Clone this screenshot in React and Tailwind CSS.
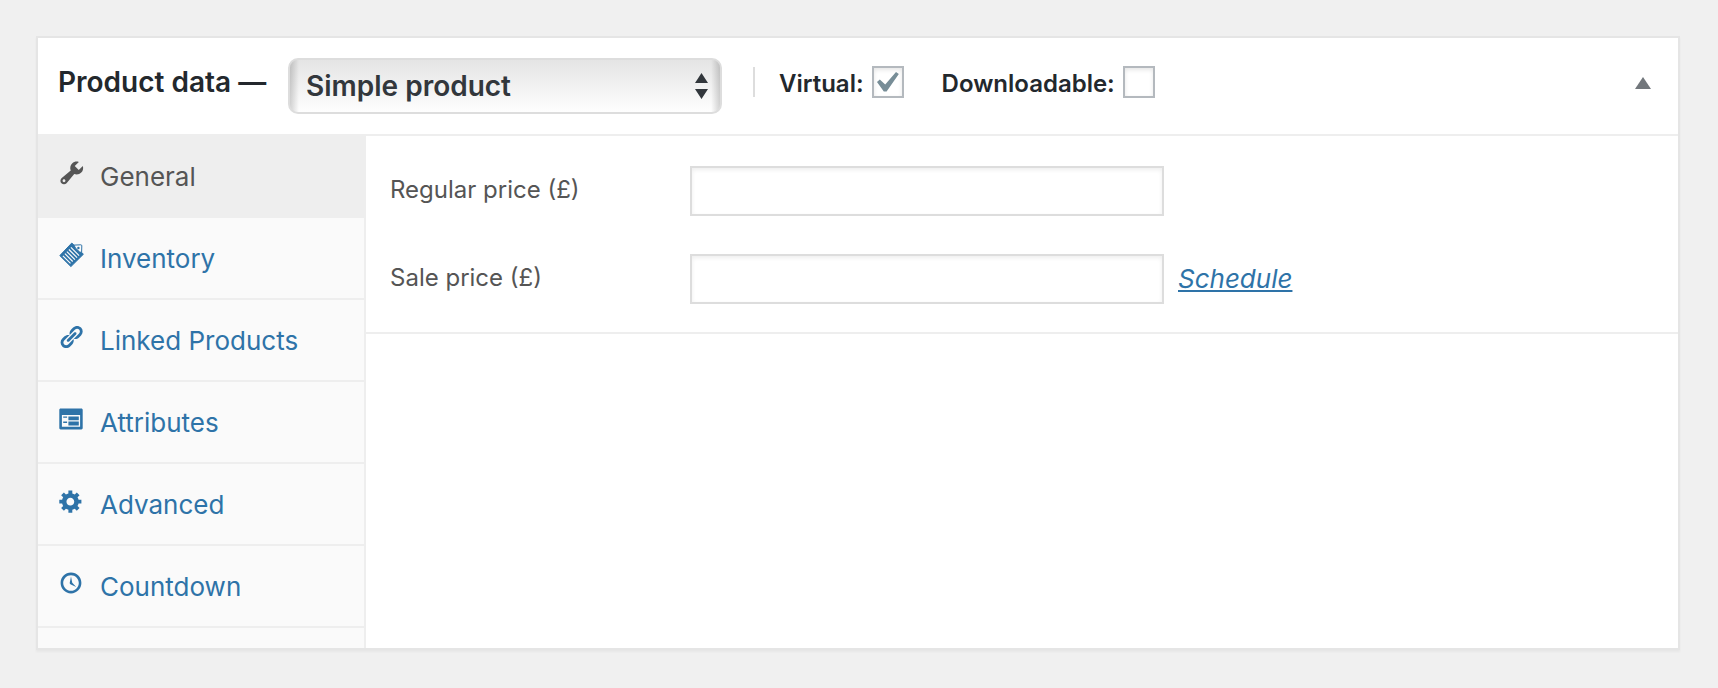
import { useState } from "react";

const icons = {
  wrench: {
    viewBox: "0.3 0.9 18.3 18.3",
    path: "M16.68 9.77c-1.34 1.34-3.3 1.67-4.95.99l-5.41 6.52c-.99.99-2.59.99-3.58 0s-.99-2.59 0-3.57l6.52-5.42c-.68-1.65-.35-3.61.99-4.95 1.28-1.28 3.12-1.62 4.72-1.06l-2.89 2.89 2.82 2.82 2.86-2.87c.53 1.58.18 3.39-1.08 4.65zM3.81 16.21c.4.39 1.04.39 1.43 0 .4-.4.4-1.04 0-1.43-.39-.4-1.03-.4-1.43 0-.39.39-.39 1.03 0 1.43z",
  },
  link: {
    viewBox: "0 0 20 20",
    path: "M17.74 2.76c1.68 1.69 1.68 4.41 0 6.1l-1.53 1.52c-1.12 1.12-2.7 1.47-4.14 1.09l2.62-2.61.76-.77.76-.76c.84-.84.84-2.2 0-3.04-.84-.85-2.2-.85-3.04 0l-.77.76-3.38 3.38c-.37-1.44-.02-3.02 1.1-4.14l1.52-1.53c1.69-1.68 4.42-1.68 6.1 0zM8.59 13.43l5.34-5.34c.42-.42.42-1.1 0-1.52-.44-.43-1.13-.39-1.53 0l-5.33 5.34c-.42.42-.42 1.1 0 1.52.44.43 1.13.39 1.52 0zm-.76 2.29l4.14-4.15c.38 1.44.03 3.02-1.09 4.14l-1.52 1.53c-1.69 1.68-4.41 1.68-6.1 0-1.68-1.68-1.68-4.42 0-6.1l1.53-1.52c1.12-1.12 2.7-1.47 4.14-1.1l-4.14 4.15c-.85.84-.85 2.2 0 3.05.84.84 2.2.84 3.04 0z",
  },
  card: {
    viewBox: "0 0 20 20",
    path: "M2 2h16c.55 0 1 .45 1 1v14c0 .55-.45 1-1 1H2c-.55 0-1-.45-1-1V3c0-.55.45-1 1-1zm15 14V7H3v9h14zM4 8v1h3V8H4zm4 0v3h8V8H8zm-4 4v1h3v-1H4zm4 0v3h8v-3H8z",
  },
  gear: {
    viewBox: "0 0 20 20",
    path: "M18 12h-2.18c-.17.7-.44 1.35-.81 1.93l1.54 1.54-2.1 2.1-1.54-1.54c-.58.36-1.23.63-1.91.79V19H8v-2.18c-.68-.16-1.33-.43-1.91-.79l-1.54 1.54-2.12-2.12 1.54-1.54c-.36-.58-.63-1.23-.79-1.91H1V9.03h2.17c.16-.7.44-1.35.8-1.94L2.43 5.55l2.1-2.1 1.54 1.54c.58-.37 1.24-.64 1.93-.81V2h3v2.18c.68.16 1.33.43 1.91.79l1.54-1.54 2.12 2.12-1.54 1.54c.36.59.64 1.24.8 1.94H18V12zm-8.5 1.5c1.66 0 3-1.34 3-3s-1.34-3-3-3-3 1.34-3 3 1.34 3 3 3z",
  },
  clock: {
    viewBox: "0 0 20 20",
    path: "M10 2c4.42 0 8 3.58 8 8s-3.58 8-8 8-8-3.58-8-8 3.58-8 8-8zm0 14c3.31 0 6-2.69 6-6s-2.69-6-6-6-6 2.69-6 6 2.69 6 6 6zm-.71-5.29c.07.05.14.1.23.15l-.02.02L14 13l-3.03-3.19L10 5l-.97 4.81h.01c0 .02-.01.05-.02.09S9 9.97 9 10c0 .28.1.52.29.71z",
  },
};

function Icon({ name }) {
  const shared = "mb-1.5 size-[26px] shrink-0";
  if (name === "inventory") {
    return (
      <svg viewBox="0 0 26 26" className={shared} aria-hidden="true">
        <path
          d="M13.8 1 L1.8 13.6 L12.9 24.6 L25.4 12.2 Z"
          fill="currentColor"
          stroke="currentColor"
          strokeLinejoin="round"
        />
        <path
          d="M4.9 13.8l7.6 7.6M6.9 11.7l7.8 7.8M8.9 9.6l8 8M10.9 7.5l8.2 8.2M12.9 5.4l8.2 8.2"
          stroke="#fafafa"
          strokeWidth="1.2"
          fill="none"
        />
        <path
          d="M16 3.1l6.8-.3q1 0 1 1l-.2 6.8-2.2-.8-4-3.8z"
          fill="#fafafa"
          stroke="currentColor"
          strokeWidth="1"
        />
        <circle cx="20.4" cy="6" r="1.2" fill="currentColor" />
      </svg>
    );
  }
  const { viewBox, path } = icons[name];
  return (
    <svg viewBox={viewBox} className={shared} fill="currentColor" aria-hidden="true">
      <path d={path} />
    </svg>
  );
}

const tabs = [
  { label: "General", icon: "wrench" },
  { label: "Inventory", icon: "inventory" },
  { label: "Linked Products", icon: "link" },
  { label: "Attributes", icon: "card" },
  { label: "Advanced", icon: "gear" },
  { label: "Countdown", icon: "clock" },
];

function Check({ id, label, defaultChecked }) {
  return (
    <div className="flex items-center gap-2">
      <label htmlFor={id} className="pt-1 text-2xl font-semibold">
        {label}
      </label>
      <span className="relative block size-8">
        <input
          id={id}
          type="checkbox"
          defaultChecked={defaultChecked}
          className="peer block size-8 appearance-none border-2 border-[#b4b9be] bg-white shadow-[inset_0_2px_4px_rgba(0,0,0,0.1)]"
        />
        <svg
          viewBox="3.4 2.03 15.24 15.24"
          className="pointer-events-none absolute inset-0 hidden size-8 text-[#778d97] peer-checked:block"
          fill="currentColor"
          aria-hidden="true"
        >
          <path d="M14.83 4.89l1.34.94-5.81 8.38H9.02L5.78 9.67l1.34-1.25 2.57 2.4z" />
        </svg>
      </span>
    </div>
  );
}

function PriceField({ id, label, children }) {
  return (
    <div className="flex items-center">
      <label htmlFor={id} className="w-[300px] shrink-0 pb-0.5 text-2xl text-[#555]">
        {label}
      </label>
      <input
        id={id}
        type="text"
        className="h-[50px] w-[474px] min-w-0 border-2 border-[#ddd] bg-white px-2 text-2xl shadow-[inset_0_2px_4px_rgba(0,0,0,0.07)]"
      />
      {children}
    </div>
  );
}

export default function App() {
  const [active, setActive] = useState("General");
  return (
    <div className="min-h-screen bg-[#f0f0f0] py-9 pr-[38px] pl-9 font-[Inter,'Liberation_Sans',sans-serif] text-[#23282d]">
      <section className="border-2 border-[#e5e5e5] bg-white shadow-[0_2px_2px_rgba(0,0,0,0.04)]">
        <header className="flex items-start border-b-2 border-[#eee] px-5 py-5">
          <h2 className="flex h-12 w-[230px] shrink-0 items-center text-[28px] font-semibold whitespace-nowrap">
            Product data —
          </h2>
          <div className="relative w-[434px]">
            <select
              aria-label="Product type"
              className="block h-14 w-full appearance-none rounded-[10px] border-2 border-[#ddd] bg-[linear-gradient(to_right,rgba(0,0,0,0.17),transparent_9px,transparent_calc(100%-9px),rgba(0,0,0,0.17)),linear-gradient(to_bottom,#e4e4e4,#fefefe)] px-4 text-[28px] font-semibold text-[#32373c]"
            >
              <option>Simple product</option>
              <option>Grouped product</option>
              <option>External/Affiliate product</option>
              <option>Variable product</option>
            </select>
            <svg
              viewBox="0 0 13 26"
              className="pointer-events-none absolute top-[15px] right-3.5 h-[26px] w-[13px] text-[#32373c]"
              fill="currentColor"
              aria-hidden="true"
            >
              <path d="M6.5 0L13 10H0zM0 16h13L6.5 26z" />
            </svg>
          </div>
          <div className="ml-[31px] flex h-12 items-center">
            <div className="mr-6 h-[30px] border-l-2 border-[#ddd]" />
            <div className="flex gap-[38px]">
              <Check id="virtual" label="Virtual:" defaultChecked />
              <Check id="downloadable" label="Downloadable:" />
            </div>
          </div>
          <button
            type="button"
            aria-label="Toggle panel"
            className="ml-auto flex h-[50px] w-[30px] items-center justify-center text-[#72777c]"
          >
            <svg viewBox="0 0 16 12" className="h-3 w-4" fill="currentColor" aria-hidden="true">
              <path d="M8 0l8 12H0z" />
            </svg>
          </button>
        </header>

        <div className="flex">
          <nav className="w-[328px] shrink-0 border-r-2 border-[#eee] bg-[#fafafa] pb-5">
            <ul>
              {tabs.map(({ label, icon }) => (
                <li key={label}>
                  <a
                    href={"#" + icon}
                    onClick={() => setActive(label)}
                    className={
                      "flex h-[82px] items-center gap-4 border-b-2 border-[#eee] px-5 text-[26px] " +
                      (label === active ? "bg-[#eee] text-[#555]" : "text-[#2e73a8]")
                    }
                  >
                    <Icon name={icon} />
                    {label}
                  </a>
                </li>
              ))}
            </ul>
          </nav>

          <div className="min-w-0 grow">
            <div className="flex flex-col gap-[38px] border-b-2 border-[#eee] px-6 pt-[30px] pb-7">
              <PriceField id="regular-price" label="Regular price (£)" />
              <PriceField id="sale-price" label="Sale price (£)">
                <a href="#schedule" className="ml-3.5 pb-0.5 text-[26px] text-[#2e73a8] italic underline">
                  Schedule
                </a>
              </PriceField>
            </div>
          </div>
        </div>
      </section>
    </div>
  );
}
